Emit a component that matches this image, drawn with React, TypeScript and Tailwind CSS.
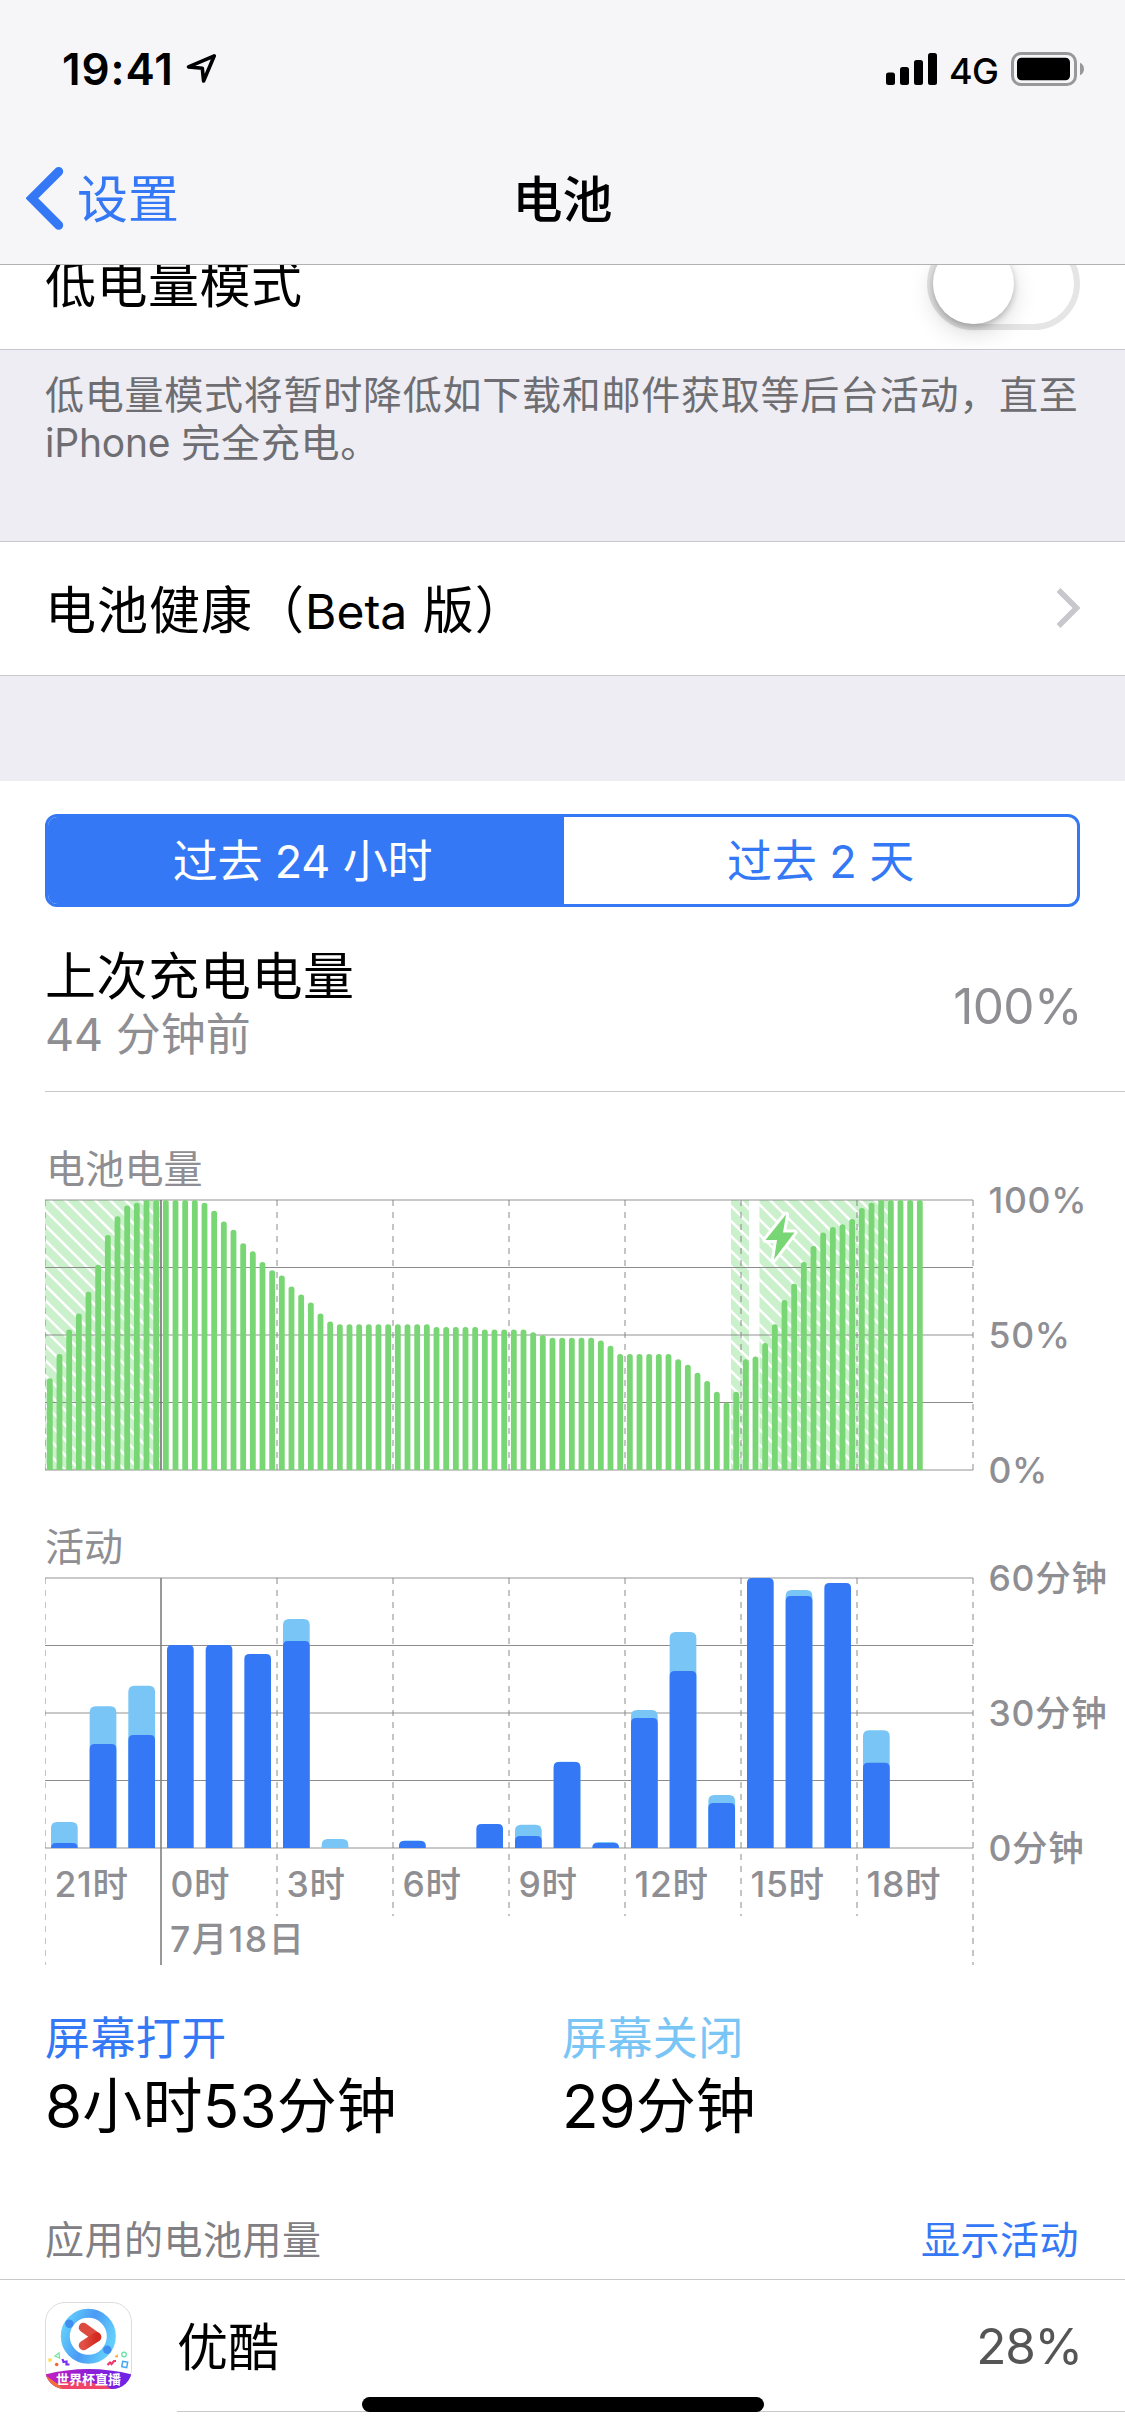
import type { ReactNode } from "react"

const FONT = "font-['Inter','Noto_Sans_CJK_SC',sans-serif]"

// battery level in percent, one value per 15 minutes
const levels = [
  34, 43, 52, 58, 66, 76, 87, 94, 98, 99, 100, 100,
  100, 100, 100, 100, 99, 96, 92, 89, 84, 81, 77, 74,
  72, 68, 65, 62, 58, 55, 54, 54, 54, 54, 54, 54,
  54, 54, 54, 54, 53, 53, 53, 53, 53, 52, 52, 52,
  52, 52, 51, 50, 49, 49, 49, 49, 49, 48, 46, 43,
  43, 43, 43, 43, 43, 41, 39, 36, 33, 29, 25, 29,
  41, 42, 47, 54, 63, 69, 77, 83, 88, 90, 91, 93,
  97, 99, 100, 100, 100, 100, 100,
]

// charging periods, as x ranges
const charging = [
  [45, 160],
  [731, 749],
  [759.5, 888],
]

// bar heights per hour: [total, screen on]
const activity = [
  [26, 5], [141.7, 104], [162.3, 113], [203, 203], [203, 203], [194, 194],
  [229, 207], [9, 0], [0, 0], [7.5, 7], [0, 0], [24, 24],
  [23.3, 12], [86.3, 86], [6, 5], [138, 130], [216, 177], [53, 45],
  [270, 270], [258, 252], [265, 265], [117.7, 85.3],
]

const hours = ["21时", "0时", "3时", "6时", "9时", "12时", "15时", "18时"]

const X0 = 45
const STEP = 116

function topRounded(x: number, bottom: number, w: number, h: number, radius: number) {
  const r = Math.min(radius, h)
  const y = bottom - h
  return `M${x} ${bottom}V${y + r}Q${x} ${y} ${x + r} ${y}H${x + w - r}Q${x + w} ${y} ${x + w} ${y + r}V${bottom}Z`
}

function StatusBar() {
  return (
    <div className="flex h-[138px] items-center justify-between pl-[62px] pr-[41px]">
      <div className="flex items-center">
        <span className="text-[44px] font-semibold tracking-[0.9px] text-black">19:41</span>
        <svg width="34" height="34" viewBox="186 52 34 34" className="ml-[11px]">
          <path d="M215.3 55.8 189.5 66.9 203.3 68.2 204.6 81Z" fill="none" stroke="#000" strokeWidth="3.6" strokeLinejoin="round" />
        </svg>
      </div>
      <div className="flex items-center">
        <svg width="52" height="34" viewBox="886 52 52 34">
          <rect x="886" y="72.5" width="9" height="12.5" rx="2.5" />
          <rect x="900" y="67" width="9" height="18" rx="2.5" />
          <rect x="914" y="60" width="9" height="25" rx="2.5" />
          <rect x="928" y="53" width="9" height="32" rx="2.5" />
        </svg>
        <span className="ml-[11px] mt-[3px] w-[62px] text-[36px] font-medium tracking-[-0.6px] text-black">4G</span>
        <svg width="73" height="34" viewBox="1011 52 73 34">
          <rect x="1012.5" y="53.5" width="63" height="31" rx="8.5" fill="none" stroke="#98989a" strokeWidth="3" />
          <rect x="1017" y="57.8" width="53" height="22.4" rx="4.5" />
          <path d="M1080 62.7C1085.300 64.500 1085.300 73.500 1080 75.300Z" fill="#98989a" />
        </svg>
      </div>
    </div>
  )
}

function NavBar() {
  return (
    <div className="relative flex h-[120px] items-center justify-center">
      <div className="absolute left-[26px] top-0 flex h-[120px] items-center text-[#3478f6]">
        <svg width="38" height="66" viewBox="26 165 38 66">
          <path d="M58.700 171.500 31.800 198.300 58.700 225.200" fill="none" stroke="#3478f6" strokeWidth="9" strokeLinecap="round" strokeLinejoin="miter" />
        </svg>
        <span className="ml-[13px] mt-[3px] text-[51px] leading-[60px]">设置</span>
      </div>
      <span className="mt-[3px] text-[50px] font-medium leading-[60px] text-black">电池</span>
    </div>
  )
}

function Toggle() {
  return (
    <div className="h-[93px] w-[153px] rounded-full border-[6px] border-[#e5e5e5] bg-white">
      <div className="size-[81px] rounded-full bg-white shadow-[0_9px_24px_rgba(0,0,0,0.15),0_3px_6px_rgba(0,0,0,0.22)]" />
    </div>
  )
}

function AxisLabel({ x = 988.5, y, children }: { x?: number; y: number; children: ReactNode }) {
  return (
    <text x={x} y={y} fontSize="35.5" fontWeight="500" fill="#8e8e93" className={`tracking-[0.7px] ${FONT}`}>
      {children}
    </text>
  )
}

function HorizontalGrid({ top }: { top: number }) {
  return (
    <g>
      {[0, 135, 270].map((d) => (
        <rect key={d} x={X0} y={top + d - 1} width="928" height="2" fill="#7f7f7f" fillOpacity="0.42" />
      ))}
      {[67, 202].map((d) => (
        <rect key={d} x={X0} y={top + d} width="928" height="1" fill="#8c8c8c" />
      ))}
    </g>
  )
}

function BatteryChart() {
  return (
    <svg width="1125" height="274" viewBox="0 1198 1125 274" className="block overflow-visible">
      <defs>
        <pattern id="hatch" width="15" height="15" patternUnits="userSpaceOnUse">
          <rect width="15" height="15" fill="#cbf0cc" />
          <path d="M-10 -15 20 15M-10 0 20 30M5 0 20 15" stroke="#fff" strokeWidth="2.6" />
        </pattern>
      </defs>
      {charging.map(([from, to]) => (
        <rect key={from} x={from} y="1200" width={to - from} height="270" fill="url(#hatch)" />
      ))}
      <HorizontalGrid top={1200} />
      {levels.map((v, i) => (
        <path key={i} d={topRounded(X0 + (i + 0.5) * (STEP / 12) - 2.9, 1470, 5.8, v * 2.7, 2.8)} fill="#79d674" />
      ))}
      {[0, 2, 3, 4, 5, 6, 7, 8].map((i) => (
        <path
          key={i}
          d={`M${X0 + i * STEP + (i === 0 ? 0.5 : 0)} 1200V1470`}
          stroke="#7f7f7f"
          strokeOpacity="0.45"
          strokeWidth={i === 0 ? 1 : 2}
          strokeDasharray="6 6"
        />
      ))}
      <path d="M161 1200V1470" stroke="#6f6f6f" strokeOpacity="0.8" strokeWidth="2" />
      <path
        d="M786 1214.500 765.500 1240H777L774 1259.500 794.500 1232.500H783Z"
        fill="#79d674"
        stroke="#fff"
        strokeWidth="6"
        strokeLinejoin="round"
        paintOrder="stroke"
      />
      <AxisLabel y={1213}>100%</AxisLabel>
      <AxisLabel y={1348}>50%</AxisLabel>
      <AxisLabel y={1483}>0%</AxisLabel>
    </svg>
  )
}

function ActivityChart() {
  return (
    <svg width="1125" height="400" viewBox="0 1576 1125 400" className="block overflow-visible">
      <HorizontalGrid top={1578} />
      {activity.map(([total, on], i) => {
        const x = X0 + i * (STEP / 3) + 6
        return (
          <g key={i}>
            {total > on && <path d={topRounded(x, 1848, 26.7, total, 6)} fill="#79c5f5" />}
            {on > 0 && <path d={topRounded(x, 1848, 26.7, on, 5)} fill="#3478f6" />}
          </g>
        )
      })}
      {[0, 2, 3, 4, 5, 6, 7, 8].map((i) => (
        <path
          key={i}
          d={`M${X0 + i * STEP + (i === 0 ? 0.5 : 0)} 1578V${i === 0 || i === 8 ? 1965 : 1916}`}
          stroke="#7f7f7f"
          strokeOpacity="0.45"
          strokeWidth={i === 0 ? 1 : 2}
          strokeDasharray="6 6"
        />
      ))}
      <path d="M161 1578V1965" stroke="#7f7f7f" strokeOpacity="0.8" strokeWidth="2" />
      {hours.map((label, i) => (
        <AxisLabel key={label} x={X0 + i * STEP + 9.500} y={1897}>
          {label}
        </AxisLabel>
      ))}
      <AxisLabel x={170} y={1952}>
        <tspan letterSpacing="1.400">7月18日</tspan>
      </AxisLabel>
      <AxisLabel y={1591}>60分钟</AxisLabel>
      <AxisLabel y={1726}>30分钟</AxisLabel>
      <AxisLabel y={1861}>0分钟</AxisLabel>
    </svg>
  )
}

function YoukuIcon() {
  return (
    <svg width="87" height="87" viewBox="0 0 87 87">
      <defs>
        <linearGradient id="ring" x1="0" y1="0.2" x2="1" y2="0.6">
          <stop offset="0" stopColor="#62cdfb" />
          <stop offset="0.5" stopColor="#4a9af5" />
          <stop offset="1" stopColor="#62cdfb" />
        </linearGradient>
        <linearGradient id="banner" x1="0" y1="0" x2="1" y2="0">
          <stop offset="0" stopColor="#c41fc0" />
          <stop offset="0.55" stopColor="#8a1fd8" />
          <stop offset="1" stopColor="#6a24ea" />
        </linearGradient>
        <linearGradient id="arrow" x1="0" y1="0" x2="1" y2="0">
          <stop offset="0" stopColor="#e05046" />
          <stop offset="1" stopColor="#d42a20" />
        </linearGradient>
        <clipPath id="mask">
          <rect width="87" height="87" rx="20" />
        </clipPath>
      </defs>
      <rect x="0.5" y="0.5" width="86" height="86" rx="19.5" fill="#fff" stroke="#dcdcdc" />
      <circle cx="43.300" cy="34.300" r="23" fill="none" stroke="url(#ring)" strokeWidth="9" />
      <circle cx="24.300" cy="21.700" r="4.200" fill="#3f8ef0" />
      <circle cx="62.300" cy="47.700" r="4.200" fill="#3f8ef0" />
      <path d="M38.500 25.500 51.500 35" stroke="#dc4a40" strokeWidth="9.500" strokeLinecap="round" />
      <path d="M51.500 35 38.500 43.500" stroke="url(#arrow)" strokeWidth="9.500" strokeLinecap="round" />
      {/* confetti */}
      <path d="M10 54 14 51 14.500 56Z" fill="none" stroke="#7be3a4" strokeWidth="1.300" />
      <path d="M3.500 56.500 6.500 59.500M6.500 56.500 3.500 59.500" stroke="#ffd94a" strokeWidth="1.500" />
      <circle cx="11.700" cy="62.500" r="1.800" fill="#f2643c" />
      <path d="M17.500 57 18.500 60 21.500 59.500 21.500 62.500 24.500 62.500" fill="none" stroke="#7a2ff0" strokeWidth="2.200" />
      <path d="M62.500 63 65 60.500 66.500 62 69 59 71 59" fill="none" stroke="#f0386e" strokeWidth="2.200" />
      <path d="M69.500 55 72.500 52 73 55.500Z" fill="#f7a83a" />
      <circle cx="79" cy="52.500" r="2.300" fill="none" stroke="#6fe3ae" strokeWidth="1.400" />
      <rect x="77.200" y="59.700" width="5" height="5.500" fill="none" stroke="#48a8f2" strokeWidth="1.500" transform="rotate(10 79.700 62.500)" />
      <g clipPath="url(#mask)">
        <path d="M0 72.500Q43.500 61.500 87 72.500V87H0Z" fill="url(#banner)" />
        <path d="M0 73 20 87H0Z" fill="#f2703a" />
        <path d="M12 81Q35 77 62 84L66 87H18Z" fill="#ee4568" />
      </g>
      <text x="43.500" y="82" textAnchor="middle" fontSize="13" fontWeight="700" fill="#fff" className="font-['Noto_Sans_CJK_SC',sans-serif]">
        世界杯直播
      </text>
    </svg>
  )
}

export default function App() {
  return (
    <div className={`relative flex h-[2436px] w-[1125px] flex-col overflow-hidden bg-white text-black ${FONT}`}>
      {/* Header */}
      <header className="z-10 h-[265px] shrink-0 border-b border-[#b2b2b4] bg-[#f6f6f8]">
        <StatusBar />
        <NavBar />
      </header>

      {/* Low power mode, scrolled partly under the header */}
      <div className="-mt-[48px] flex h-[133px] shrink-0 items-center justify-between border-b border-[#c8c7cc] bg-white px-[45px]">
        <span className="mt-[4px] text-[51px] leading-[60px] tracking-[0.5px]">低电量模式</span>
        <Toggle />
      </div>
      <div className="z-10 h-[191px] shrink-0 bg-[#eeedf3] pl-[45px] pt-[21px] text-[39px] leading-[48px] tracking-[0.75px] text-[#6d6d72]">
        <p className="whitespace-nowrap">低电量模式将暂时降低如下载和邮件获取等后台活动，直至</p>
        <p>
          <span className="tracking-[-0.2px]">iPhone </span>完全充电。
        </p>
      </div>

      {/* Battery health */}
      <div className="flex h-[135px] shrink-0 items-center justify-between border-y border-[#c8c7cc] bg-white px-[45px]">
        <span className="mt-[5px] text-[51px] leading-[60px] tracking-[1px]">
          电池健康（<span className="text-[48px] tracking-normal">Beta</span> 版）
        </span>
        <svg width="24" height="40" viewBox="0 0 24 40" className="-mt-[2px]">
          <path d="M2.500 2 20.500 20 2.500 38" fill="none" stroke="#c7c7cc" strokeWidth="5.500" />
        </svg>
      </div>
      <div className="h-[105px] shrink-0 bg-[#eeedf3]" />

      {/* Range picker */}
      <div className="mx-[45px] mt-[33px] flex h-[93px] shrink-0 overflow-hidden rounded-[12px] border-[3px] border-[#3478f6] text-[45px]">
        <div className="flex w-[516px] items-center justify-center bg-[#3478f6] pr-[7px] pt-[2px] tracking-[-0.2px] text-white">
          过去 24 小时
        </div>
        <div className="flex flex-1 items-center justify-center pt-[2px] tracking-[-0.1px] text-[#3478f6]">过去 2 天</div>
      </div>

      {/* Last charge */}
      <div className="ml-[45px] h-[185px] shrink-0 border-b border-[#c8c7cc] pr-[43px] pt-[41px]">
        <div className="flex h-[116px] items-center justify-between">
          <div>
            <div className="h-[58px] text-[51px] leading-[58px] tracking-[0.6px]">上次充电电量</div>
            <div className="h-[58px] text-[45px] leading-[58px] text-[#8e8e93]">44 分钟前</div>
          </div>
          <span className="text-[49.5px] tracking-[-0.6px] text-[#8e8e93]">100%</span>
        </div>
      </div>

      {/* Charts */}
      <h2 className="mt-[48px] h-[58px] shrink-0 pl-[46px] text-[39px] leading-[58px] tracking-[0.2px] text-[#8e8e93]">电池电量</h2>
      <div className="h-[274px] shrink-0">
        <BatteryChart />
      </div>
      <h2 className="mt-[46px] h-[58px] shrink-0 pl-[45px] text-[39px] leading-[58px] text-[#8e8e93]">活动</h2>
      <div className="h-[400px] shrink-0">
        <ActivityChart />
      </div>

      {/* Totals */}
      <div className="mt-[34px] grid h-[135px] shrink-0 grid-cols-[517px_1fr] pl-[45px]">
        <div>
          <div className="h-[58px] text-[45px] leading-[58px] tracking-[0.4px] text-[#3478f6]">屏幕打开</div>
          <div className="h-[77px] text-[60px] leading-[77px] tracking-[0.2px]">8小时53分钟</div>
        </div>
        <div>
          <div className="h-[58px] text-[45px] leading-[58px] tracking-[0.4px] text-[#79c5f5]">屏幕关闭</div>
          <div className="h-[77px] text-[60px] leading-[77px]">29分钟</div>
        </div>
      </div>

      {/* Usage by app */}
      <div className="mt-[66px] flex h-[69px] shrink-0 justify-between border-b border-[#c8c7cc] pl-[45px] pr-[46px] text-[39px] leading-[58px]">
        <span className="tracking-[0.5px] text-[#808084]">应用的电池用量</span>
        <span className="tracking-[0.5px] text-[#3478f6]">显示活动</span>
      </div>
      <div className="flex h-[131px] shrink-0 items-center pl-[45px] pr-[43px]">
        <YoukuIcon />
        <span className="ml-[45px] mt-[4px] flex-1 text-[51px] leading-[60px]">优酷</span>
        <span className="mt-[2px] text-[49.5px] tracking-[-1.2px] text-[#555]">28%</span>
      </div>
      <div className="ml-[177px] h-px shrink-0 bg-[#c8c7cc]" />

      <div className="absolute bottom-[24px] left-[362px] h-[15px] w-[402px] rounded-full bg-black" />
    </div>
  )
}
